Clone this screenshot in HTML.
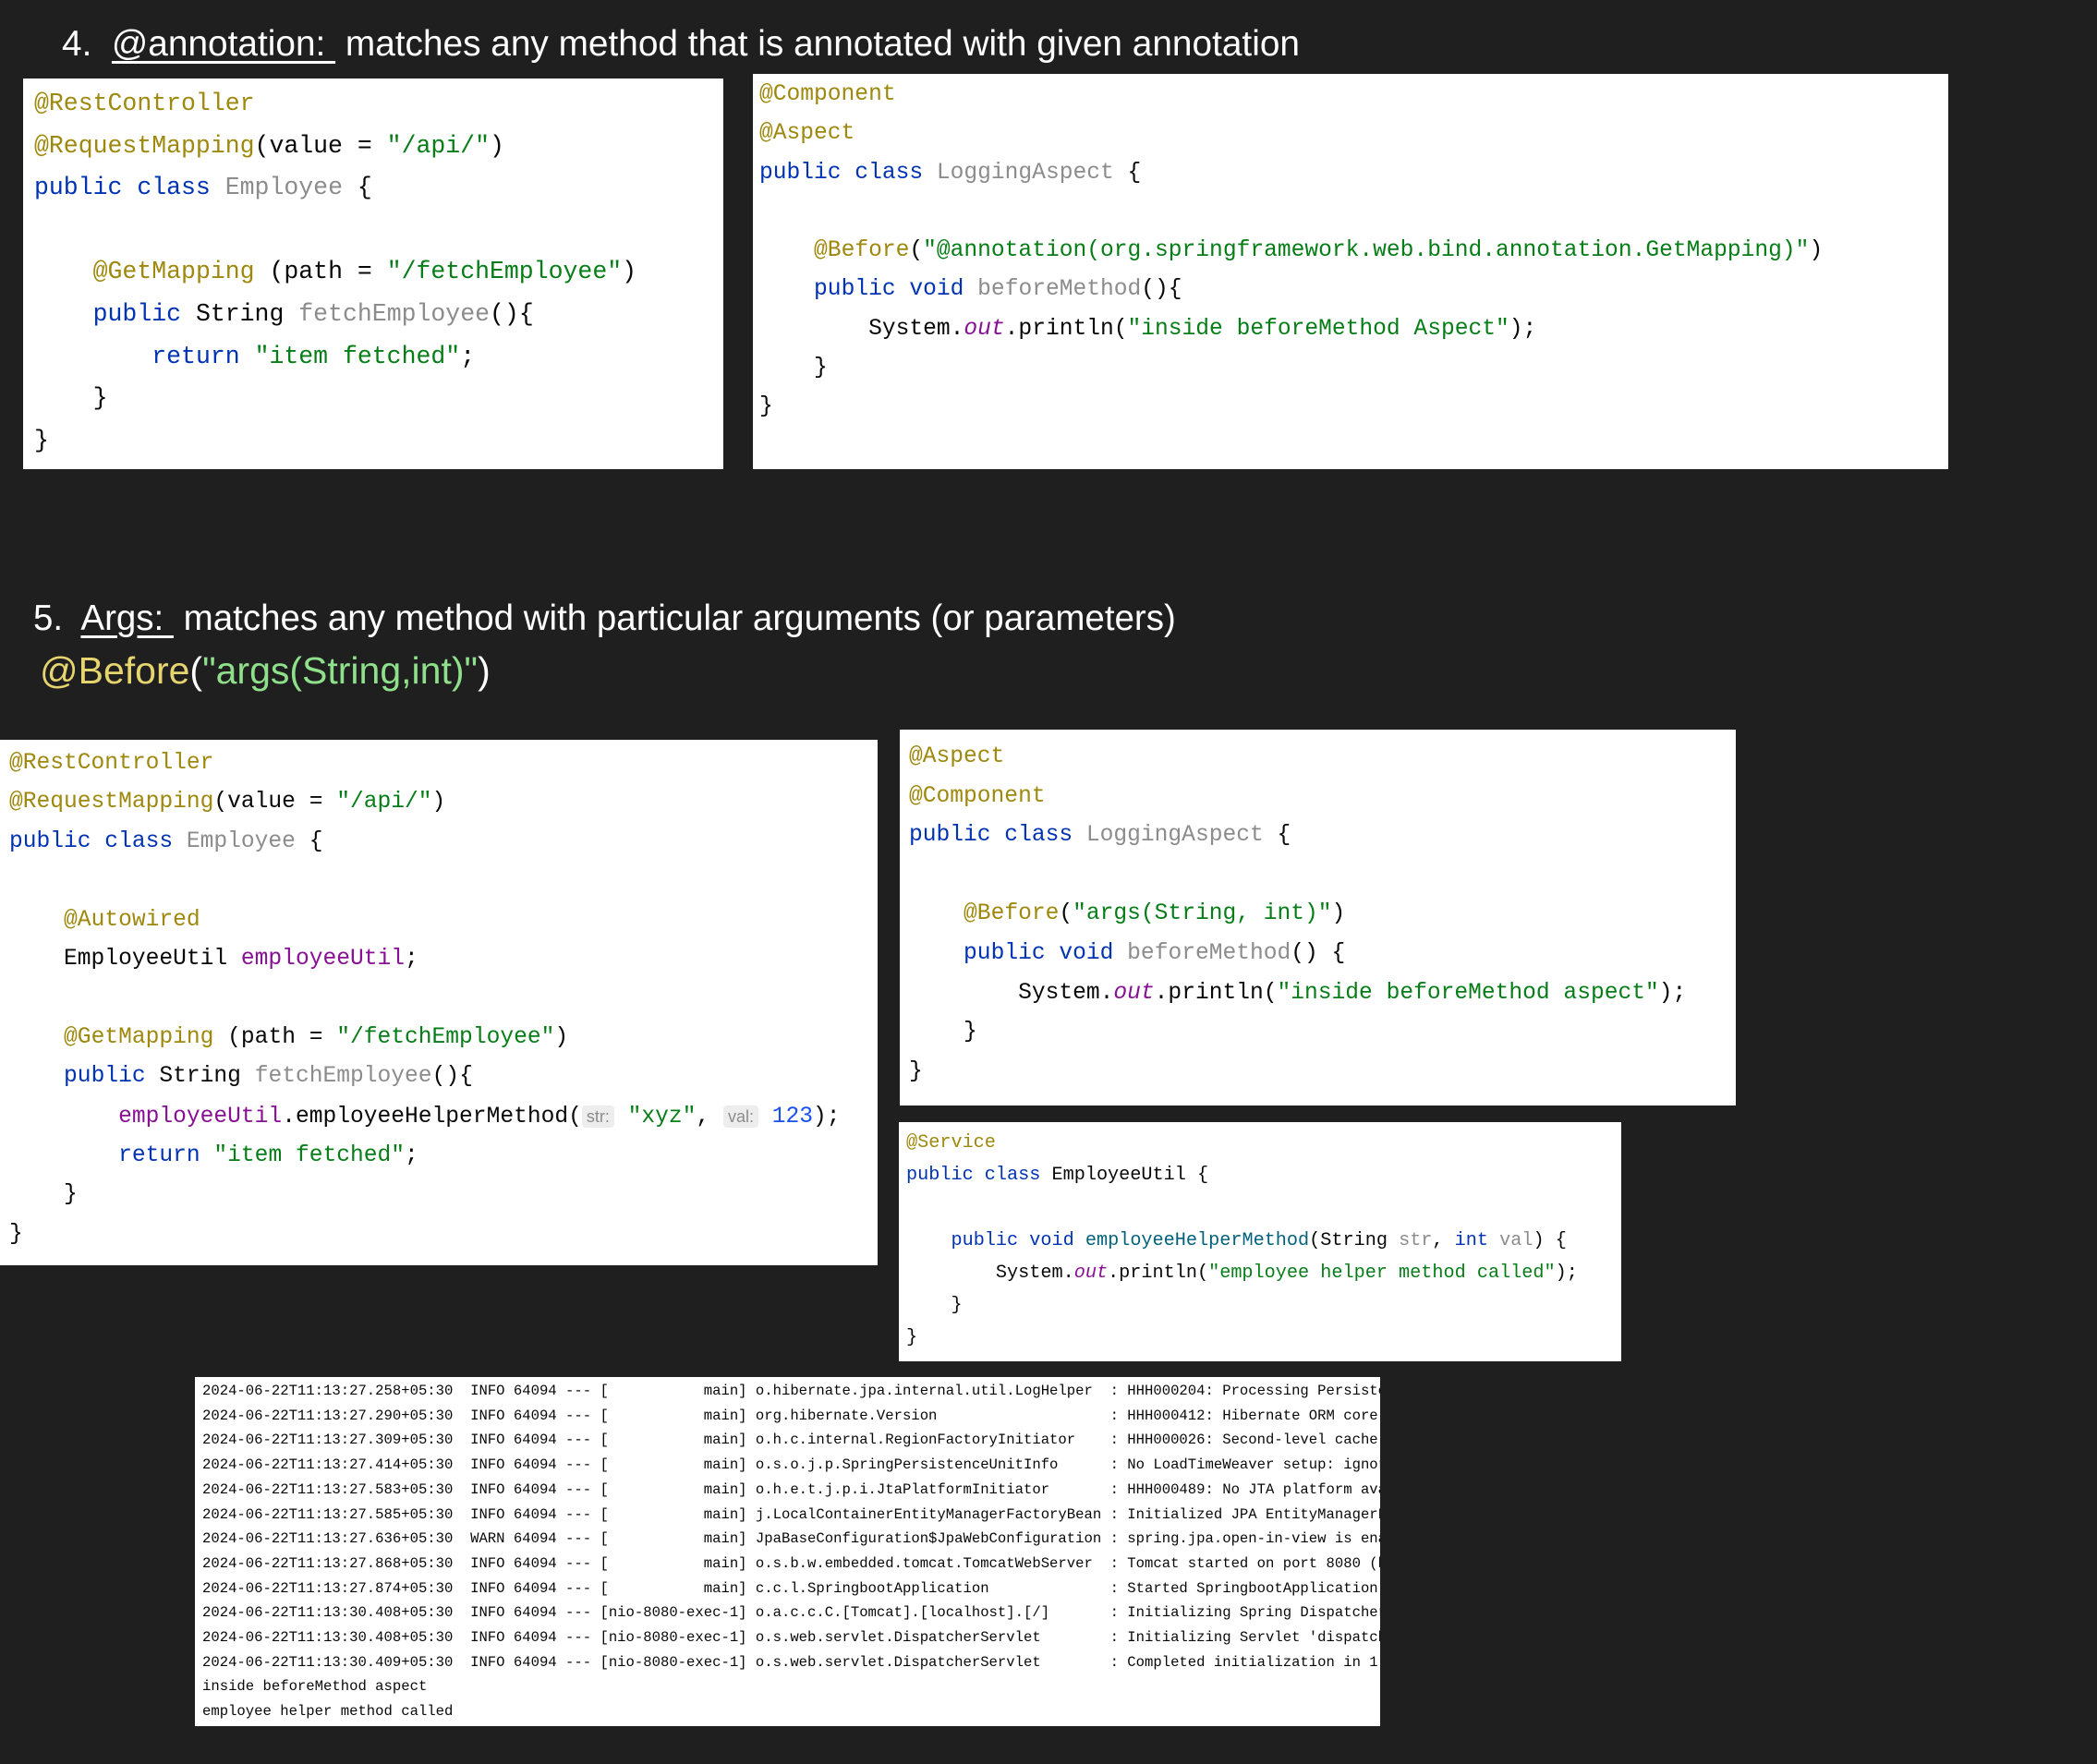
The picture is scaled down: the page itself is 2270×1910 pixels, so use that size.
<!DOCTYPE html>
<html><head><meta charset="utf-8"><style>
body{margin:0;width:2270px;height:1910px;background:#1f1f1f;position:relative;overflow:hidden;font-family:"Liberation Sans",sans-serif}
.box{position:absolute;background:#fff}
pre{position:absolute;margin:0;font-family:"Liberation Mono",monospace;color:#080808;white-space:pre}
.a{color:#9e880d}.k{color:#0033b3}.s{color:#067d17}.g{color:#8c8c8c}.p{color:#871094}.o{color:#871094;font-style:italic}.n{color:#1750eb}.m{color:#00627a}
.h{font-family:"Liberation Sans",sans-serif;font-size:18px;color:#8c8c8c;background:#ededed;border-radius:4px;padding:2px 5px}
.t{position:absolute;color:#fff;white-space:nowrap}
.t u{text-underline-offset:6px}
</style></head><body>
<div class="t" style="left:67px;top:26px;font-size:38.8px">4.&nbsp; <u>@annotation:&nbsp;</u> matches any method that is annotated with given annotation</div>
<div class="box" style="left:25px;top:85px;width:758px;height:423px"></div>
<pre style="left:37px;top:90px;font-size:26.5px;line-height:45.6px"><span class="a">@RestController</span>
<span class="a">@RequestMapping</span>(value = <span class="s">"/api/"</span>)
<span class="k">public class</span> <span class="g">Employee</span> {

    <span class="a">@GetMapping</span> (path = <span class="s">"/fetchEmployee"</span>)
    <span class="k">public</span> String <span class="g">fetchEmployee</span>(){
        <span class="k">return</span> <span class="s">"item fetched"</span>;
    }
}</pre>
<div class="box" style="left:815px;top:80px;width:1294px;height:428px"></div>
<pre style="left:822px;top:82px;font-size:24.6px;line-height:42.3px"><span class="a">@Component</span>
<span class="a">@Aspect</span>
<span class="k">public class</span> <span class="g">LoggingAspect</span> {

    <span class="a">@Before</span>(<span class="s">"@annotation(org.springframework.web.bind.annotation.GetMapping)"</span>)
    <span class="k">public void</span> <span class="g">beforeMethod</span>(){
        System.<span class="o">out</span>.println(<span class="s">"inside beforeMethod Aspect"</span>);
    }
}</pre>
<div class="t" style="left:36px;top:648px;font-size:38.5px">5.&nbsp; <u>Args:&nbsp;</u> matches any method with particular arguments (or parameters)</div>
<div class="t" style="left:43px;top:703px;font-size:41px"><span style="color:#e6d56e">@Before</span>(<span style="color:#8fe08a">"args(String,int)"</span>)</div>
<div class="box" style="left:0;top:801px;width:950px;height:569px"></div>
<pre style="left:10px;top:806px;font-size:24.6px;line-height:42.4px"><span class="a">@RestController</span>
<span class="a">@RequestMapping</span>(value = <span class="s">"/api/"</span>)
<span class="k">public class</span> <span class="g">Employee</span> {

    <span class="a">@Autowired</span>
    EmployeeUtil <span class="p">employeeUtil</span>;

    <span class="a">@GetMapping</span> (path = <span class="s">"/fetchEmployee"</span>)
    <span class="k">public</span> String <span class="g">fetchEmployee</span>(){
        <span class="p">employeeUtil</span>.employeeHelperMethod(<span class="h">str:</span> <span class="s">"xyz"</span>, <span class="h">val:</span> <span class="n">123</span>);
        <span class="k">return</span> <span class="s">"item fetched"</span>;
    }
}</pre>
<div class="box" style="left:974px;top:790px;width:905px;height:407px"></div>
<pre style="left:984px;top:799px;font-size:24.6px;line-height:42.6px"><span class="a">@Aspect</span>
<span class="a">@Component</span>
<span class="k">public class</span> <span class="g">LoggingAspect</span> {

    <span class="a">@Before</span>(<span class="s">"args(String, int)"</span>)
    <span class="k">public void</span> <span class="g">beforeMethod</span>() {
        System.<span class="o">out</span>.println(<span class="s">"inside beforeMethod aspect"</span>);
    }
}</pre>
<div class="box" style="left:973px;top:1215px;width:782px;height:259px"></div>
<pre style="left:981px;top:1220px;font-size:20.2px;line-height:35.2px"><span class="a">@Service</span>
<span class="k">public class</span> EmployeeUtil {

    <span class="k">public void</span> <span class="m">employeeHelperMethod</span>(String <span class="g">str</span>, <span class="k">int</span> <span class="g">val</span>) {
        System.<span class="o">out</span>.println(<span class="s">"employee helper method called"</span>);
    }
}</pre>
<div class="box" style="left:211px;top:1491px;width:1283px;height:378px;overflow:hidden">
<pre style="left:8px;top:2px;font-size:15.6px;line-height:26.7px">2024-06-22T11:13:27.258+05:30  INFO 64094 --- [           main] o.hibernate.jpa.internal.util.LogHelper  : HHH000204: Processing PersistenceUnitInfo
2024-06-22T11:13:27.290+05:30  INFO 64094 --- [           main] org.hibernate.Version                    : HHH000412: Hibernate ORM core version
2024-06-22T11:13:27.309+05:30  INFO 64094 --- [           main] o.h.c.internal.RegionFactoryInitiator    : HHH000026: Second-level cache disabled
2024-06-22T11:13:27.414+05:30  INFO 64094 --- [           main] o.s.o.j.p.SpringPersistenceUnitInfo      : No LoadTimeWeaver setup: ignoring
2024-06-22T11:13:27.583+05:30  INFO 64094 --- [           main] o.h.e.t.j.p.i.JtaPlatformInitiator       : HHH000489: No JTA platform available
2024-06-22T11:13:27.585+05:30  INFO 64094 --- [           main] j.LocalContainerEntityManagerFactoryBean : Initialized JPA EntityManagerFactory
2024-06-22T11:13:27.636+05:30  WARN 64094 --- [           main] JpaBaseConfiguration$JpaWebConfiguration : spring.jpa.open-in-view is enabled
2024-06-22T11:13:27.868+05:30  INFO 64094 --- [           main] o.s.b.w.embedded.tomcat.TomcatWebServer  : Tomcat started on port 8080 (http)
2024-06-22T11:13:27.874+05:30  INFO 64094 --- [           main] c.c.l.SpringbootApplication              : Started SpringbootApplication in
2024-06-22T11:13:30.408+05:30  INFO 64094 --- [nio-8080-exec-1] o.a.c.c.C.[Tomcat].[localhost].[/]       : Initializing Spring DispatcherServlet
2024-06-22T11:13:30.408+05:30  INFO 64094 --- [nio-8080-exec-1] o.s.web.servlet.DispatcherServlet        : Initializing Servlet 'dispatcherServlet'
2024-06-22T11:13:30.409+05:30  INFO 64094 --- [nio-8080-exec-1] o.s.web.servlet.DispatcherServlet        : Completed initialization in 1 ms
inside beforeMethod aspect
employee helper method called</pre>
</div>
</body></html>
